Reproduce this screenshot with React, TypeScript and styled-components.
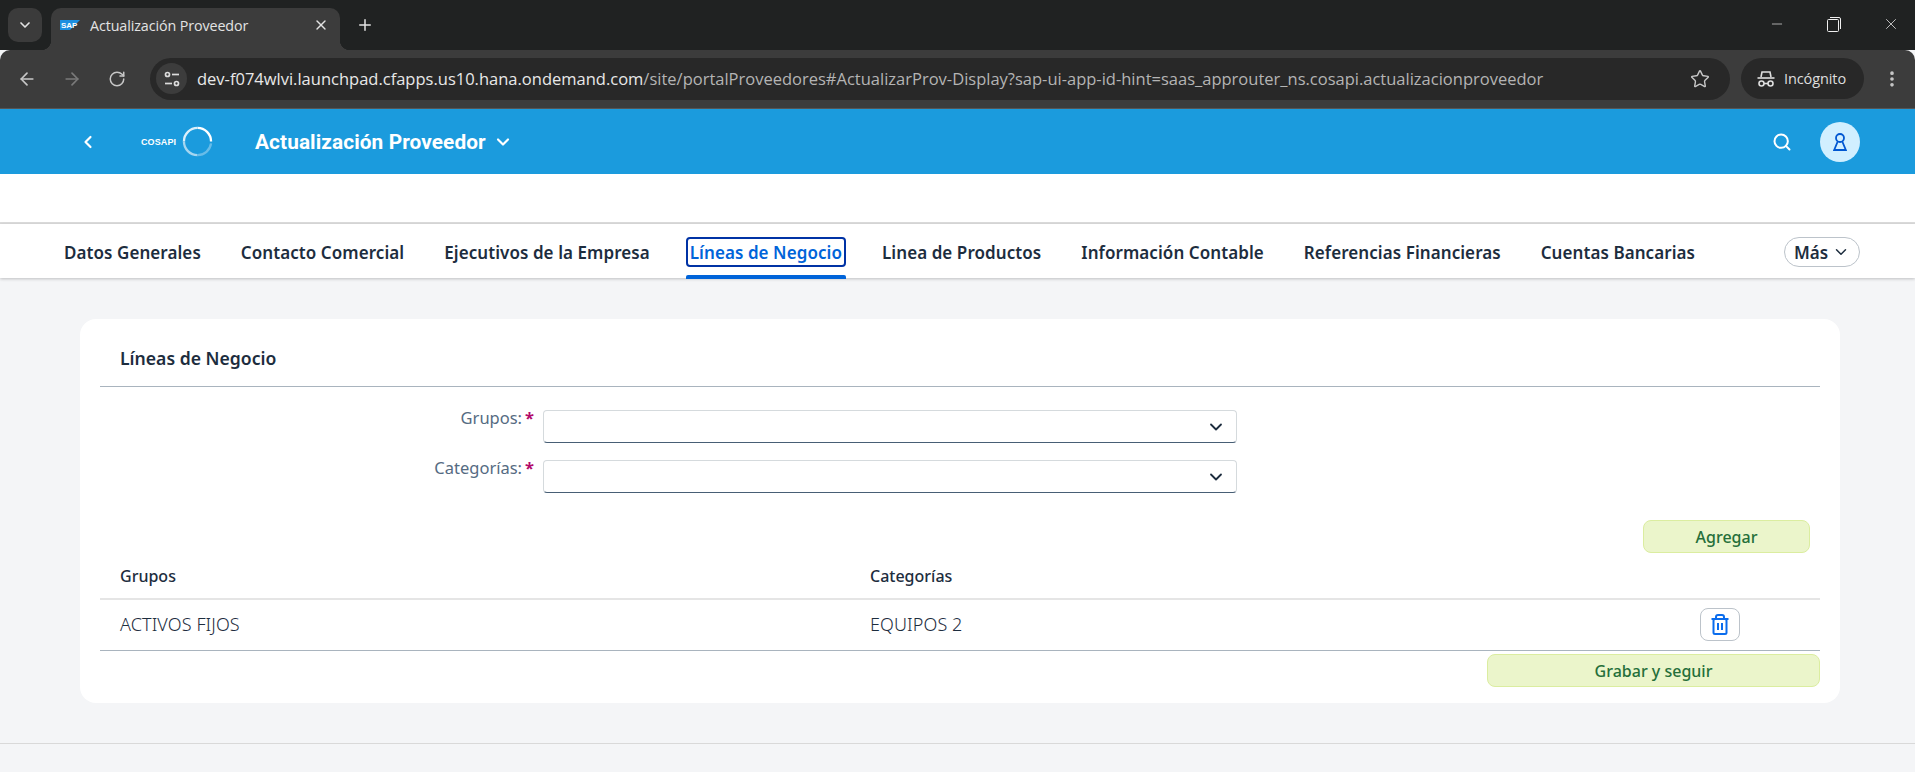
import React from "react";
import styled, { createGlobalStyle } from "styled-components";
import { ArrowLeft, ArrowRight, ChevronDown, ChevronLeft, EllipsisVertical, Minus, Plus, RotateCw, Search, Star, X } from "lucide-react";

const Global = createGlobalStyle`
  html, body { margin: 0; padding: 0; background: #f3f4f6; }
  * { box-sizing: border-box; }
`;
const Page = styled.div`
  width: 1915px; height: 772px; overflow: hidden; display: flex; flex-direction: column;
  background: #f4f5f7; font-family: "Noto Sans", sans-serif; color: #1d2d3e;
`;
const TabStrip = styled.div`
  height: 50px; background: #202222; display: flex; align-items: flex-end; padding-left: 8px; color: #e3e3e3; flex: none;
`;
const TabListBtn = styled.div`
  width: 34px; height: 34px; margin: 0 9px 8px 0; border-radius: 10px; background: #3b3b3b;
  display: flex; align-items: center; justify-content: center; color: #e3e3e3;
`;
const BrowserTab = styled.div`
  position: relative; width: 289px; height: 42px; background: #3c3c3c; border-radius: 10px 10px 0 0;
  display: flex; align-items: center; padding: 0 11px 8px 9px; gap: 10px;
  &::before, &::after { content: ""; position: absolute; bottom: 0; width: 10px; height: 10px; }
  &::before { left: -10px; background: radial-gradient(circle at 0 0, #202222 10px, #3c3c3c 10.5px); }
  &::after { right: -10px; background: radial-gradient(circle at 100% 0, #202222 10px, #3c3c3c 10.5px); }
`;
const TabTitle = styled.span`
  flex: 1; font-family: "Open Sans", sans-serif; font-size: 14.3px; color: #e3e3e3; white-space: nowrap; letter-spacing: -0.1px;
`;
const NewTab = styled.div`
  margin: 0 0 8px 14px; width: 22px; height: 34px; display: flex; align-items: center; justify-content: center; color: #e3e3e3;
`;
const WindowControls = styled.div`
  margin-left: auto; align-self: flex-start; display: flex; gap: 9px; height: 48px; align-items: center; color: #f0f0f0;
`;
const WindowBtn = styled.div`
  width: 48px; display: flex; justify-content: center; align-items: center;
`;
const Toolbar = styled.div`
  height: 59px; background: #3c3c3c; border-radius: 10px 10px 0 0; border-bottom: 1px solid #555;
  display: flex; align-items: center; flex: none; padding: 0 0 1px 17px; color: #c7c7c7;
`;
const NavBtn = styled.div<{ $dim?: boolean }>`
  width: 20px; height: 20px; margin-right: 25px; display: flex; align-items: center; justify-content: center;
  color: ${(p) => (p.$dim ? "#7a7a7a" : "#c7c7c7")};
`;
const Omnibox = styled.div`
  width: 1580px; height: 42px; margin-left: -2px; border-radius: 21px; background: #282828;
  display: flex; align-items: center; padding: 0 20px 0 6px;
`;
const TuneBadge = styled.div`
  width: 31px; height: 31px; border-radius: 50%; background: #3c3c3c; display: flex; align-items: center; justify-content: center; color: #dcdcdc; flex: none;
`;
const UrlText = styled.div`
  margin-left: 10px; font-family: "Open Sans", sans-serif; font-size: 16.5px; color: #e8e8e8; white-space: nowrap; flex: 1;
  span { color: #b4b4b4; }
`;
const IncognitoPill = styled.div`
  margin-left: 11px; width: 123px; height: 41px; border-radius: 21px; background: #282828; display: flex; align-items: center;
  padding-left: 15px; gap: 8px; color: #dedede; font-family: "Open Sans", sans-serif; font-size: 14.5px; letter-spacing: -0.1px;
`;
const Kebab = styled.div`
  margin-left: 18px; color: #c7c7c7; display: flex;
`;
const AppHeader = styled.header`
  height: 65px; background: #1b9bdd; display: flex; align-items: center; flex: none; padding-left: 78px; color: #fff;
`;
const BackIcon = styled.div`
  width: 20px; display: flex; justify-content: center; margin-right: 43px;
`;
const Logo = styled.div`
  width: 114px; display: flex; align-items: center; gap: 6px;
`;
const LogoText = styled.span`
  font-family: "Liberation Sans", sans-serif; font-weight: 700; font-size: 9px; letter-spacing: 0.1px; color: #fff;
`;
const AppTitle = styled.div`
  display: flex; align-items: center; gap: 7px; font-family: "Roboto", sans-serif; font-weight: 700; font-size: 20.8px; letter-spacing: 0.1px;
`;
const HeaderActions = styled.div`
  margin-left: auto; margin-right: 55px; display: flex; align-items: center; gap: 28px;
`;
const Avatar = styled.div`
  width: 40px; height: 40px; border-radius: 50%; background: #d1efff; display: flex; align-items: center; justify-content: center;
`;
const Spacer = styled.div`
  height: 50px; background: #fff; border-bottom: 2px solid #dcdcdc; flex: none;
`;
const TabBar = styled.nav`
  position: relative; height: 54px; background: #fff; box-shadow: 0 1px 3px rgba(0,0,0,.22); display: flex; align-items: center;
  padding: 2px 55px 0 60px; gap: 32px; flex: none;
`;
const TabItem = styled.div<{ $active?: boolean }>`
  position: relative; height: 30px; padding: 0 4px; display: flex; align-items: center; white-space: nowrap; border-radius: 4px;
  font-family: "Noto Sans", sans-serif; font-weight: 600; font-size: 17px; letter-spacing: 0.07px;
  color: ${(p) => (p.$active ? "#0064d9" : "#1d2d3e")};
  outline: ${(p) => (p.$active ? "2px solid #0032a5" : "none")}; outline-offset: -2px;
  ${(p) => p.$active && `&::after { content: ""; position: absolute; left: 0; right: 0; bottom: -12px; height: 4px; border-radius: 2px 2px 0 0; background: #0064d9; }`}
`;
const MoreBtn = styled.div`
  margin-left: auto; width: 76px; height: 30px; border: 1px solid #bcc3ca; border-radius: 15px; display: flex; align-items: center; justify-content: center; gap: 4px;
  font-weight: 600; font-size: 17px; color: #1d2d3e;
`;
const Main = styled.main`
  padding: 41px 75px 40px 80px; border-bottom: 1px solid #d9d9d9; flex: none;
`;
const Card = styled.section`
  background: #fff; border-radius: 16px; padding: 0 20px 16px; display: flex; flex-direction: column;
`;
const CardTitle = styled.h2`
  margin: 0; height: 68px; padding: 0 0 15px 20px; border-bottom: 1px solid #a9b4be; display: flex; align-items: flex-end;
  font-family: "Noto Sans", sans-serif; font-weight: 600; font-size: 17.6px; color: #1d2d3e; line-height: 26px;
`;
const Form = styled.div`
  margin-top: 23px; display: flex; flex-direction: column; gap: 17px;
`;
const FormRow = styled.div`
  display: grid; grid-template-columns: 434px 694px; column-gap: 9px; align-items: start;
`;
const Label = styled.label`
  display: flex; justify-content: flex-end; gap: 3px; font-size: 16.5px; color: #556b82; line-height: 16px;
  b { color: #b3096b; font-weight: 700; }
`;
const Select = styled.div`
  height: 33px; border: 1px solid #d5dadd; border-bottom: 1px solid #475e75; border-radius: 4px; background: #fff;
  display: flex; align-items: center; justify-content: flex-end; padding-right: 10px; color: #1d2d3e;
`;
const GreenButton = styled.button<{ $width: number; $mr?: number }>`
  width: ${(p) => p.$width}px; height: 33px; margin-right: ${(p) => p.$mr ?? 0}px; align-self: flex-end; border: 1px solid #dbeda0; border-radius: 8px;
  background: #ebf5cb; color: #256f3a; font-family: "Noto Sans", sans-serif; font-size: 16px; font-weight: 500; padding: 0;
`;
const AddWrap = styled.div`
  margin-top: 27px; display: flex; justify-content: flex-end;
`;
const HeadRow = styled.div`
  height: 47px; display: grid; grid-template-columns: 750px 750px 220px; align-items: center; padding-top: 1px;
  border-bottom: 2px solid #e5e5e5; font-weight: 500; font-size: 16px; color: #1d2d3e;
`;
const BodyRow = styled.div`
  height: 51px; display: grid; grid-template-columns: 750px 750px 220px; align-items: center; padding-bottom: 2px;
  border-bottom: 1px solid #a9b4be; font-size: 18px; font-weight: 300; letter-spacing: 0.1px; color: #1d2d3e;
`;
const Cell = styled.div`
  padding-left: 20px;
`;
const TrashBtn = styled.div`
  width: 40px; height: 33px; margin-left: 100px; margin-top: 1px; border: 1px solid #bcc3ca; border-radius: 8px; display: flex; align-items: center; justify-content: center;
`;
const SaveWrap = styled.div`
  margin-top: 3px; display: flex; justify-content: flex-end;
`;

export default function App() {
  const tabs = ["Datos Generales", "Contacto Comercial", "Ejecutivos de la Empresa", "Líneas de Negocio", "Linea de Productos", "Información Contable", "Referencias Financieras", "Cuentas Bancarias"];
  return (
    <Page>
      <Global />
      <TabStrip>
        <TabListBtn><ChevronDown size={16} strokeWidth={2.5} /></TabListBtn>
        <BrowserTab>
          <svg width="20" height="10" viewBox="0 0 20 10">
            <polygon points="0,0 20,0 10,10 0,10" fill="#1c8fe0" />
            <text x="1" y="8" fontFamily="Liberation Sans" fontWeight="700" fontSize="8" fill="#fff">SAP</text>
          </svg>
          <TabTitle>Actualización Proveedor</TabTitle>
          <X size={16} />
        </BrowserTab>
        <NewTab><Plus size={18} /></NewTab>
        <WindowControls>
          <WindowBtn><Minus size={16} strokeWidth={1} /></WindowBtn>
          <WindowBtn>
            <svg width="14" height="15" viewBox="0 0 14 15" fill="none" stroke="#f0f0f0" strokeWidth="1">
              <rect x="0.5" y="2.5" width="11" height="12" rx="1" />
              <path d="M3 0.5h9a1.5 1.5 0 0 1 1.5 1.5v10" />
            </svg>
          </WindowBtn>
          <WindowBtn><X size={18} strokeWidth={1} /></WindowBtn>
        </WindowControls>
      </TabStrip>
      <Toolbar>
        <NavBtn><ArrowLeft size={20} /></NavBtn>
        <NavBtn $dim><ArrowRight size={20} /></NavBtn>
        <NavBtn><RotateCw size={18} /></NavBtn>
        <Omnibox>
          <TuneBadge>
            <svg width="16" height="16" viewBox="0 0 16 16" fill="none" stroke="currentColor" strokeWidth="1.7">
              <circle cx="3.5" cy="3.5" r="2" /><path d="M8 3.5h7" />
              <circle cx="12.5" cy="12.5" r="2" /><path d="M1 12.5h7" />
            </svg>
          </TuneBadge>
          <UrlText>dev-f074wlvi.launchpad.cfapps.us10.hana.ondemand.com<span>/site/portalProveedores#ActualizarProv-Display?sap-ui-app-id-hint=saas_approuter_ns.cosapi.actualizacionproveedor</span></UrlText>
          <Star size={20} strokeWidth={1.7} />
        </Omnibox>
        <IncognitoPill>
          <svg width="20" height="20" viewBox="0 0 20 20" fill="none" stroke="currentColor" strokeWidth="1.6">
            <path d="M5 8l1-5h8l1 5" />
            <path d="M1.5 9h17" />
            <circle cx="5.5" cy="14.5" r="2.5" /><circle cx="14.5" cy="14.5" r="2.5" /><path d="M8 14.5h4" />
          </svg>
          Incógnito
        </IncognitoPill>
        <Kebab><EllipsisVertical size={20} strokeWidth={2.4} /></Kebab>
      </Toolbar>
      <AppHeader>
        <BackIcon><ChevronLeft size={20} strokeWidth={2.6} /></BackIcon>
        <Logo>
          <LogoText>COSAPI</LogoText>
          <svg width="31" height="31" viewBox="0 0 32 32" fill="none" strokeWidth="2.4">
            <path d="M30 16A14 14 0 0 0 16 2" stroke="#ffffff" />
            <path d="M16 2A14 14 0 0 0 2 16" stroke="#dbeffa" />
            <path d="M2 16A14 14 0 0 0 16 30" stroke="#a6d6f0" />
            <path d="M16 30A14 14 0 0 0 30 18" stroke="#68bce8" />
          </svg>
        </Logo>
        <AppTitle>Actualización Proveedor <ChevronDown size={20} strokeWidth={2.6} /></AppTitle>
        <HeaderActions>
          <Search size={20} strokeWidth={2.4} />
          <Avatar>
            <svg width="14" height="18" viewBox="0 0 14 18" fill="none" stroke="#0057d2" strokeWidth="1.8">
              <circle cx="7" cy="5" r="4" />
              <path d="M4.5 9 L1.2 17 H12.8 L9.5 9" />
            </svg>
          </Avatar>
        </HeaderActions>
      </AppHeader>
      <Spacer />
      <TabBar>
        {tabs.map((t, i) => <TabItem key={t} $active={i === 3}>{t}</TabItem>)}
        <MoreBtn>Más <ChevronDown size={18} strokeWidth={2} /></MoreBtn>
      </TabBar>
      <Main>
        <Card>
          <CardTitle>Líneas de Negocio</CardTitle>
          <Form>
            <FormRow>
              <Label>Grupos:<b>*</b></Label>
              <Select><ChevronDown size={20} strokeWidth={2.2} /></Select>
            </FormRow>
            <FormRow>
              <Label>Categorías:<b>*</b></Label>
              <Select><ChevronDown size={20} strokeWidth={2.2} /></Select>
            </FormRow>
          </Form>
          <AddWrap><GreenButton $width={167} $mr={10}>Agregar</GreenButton></AddWrap>
          <HeadRow><Cell>Grupos</Cell><Cell>Categorías</Cell></HeadRow>
          <BodyRow>
            <Cell>ACTIVOS FIJOS</Cell>
            <Cell>EQUIPOS 2</Cell>
            <TrashBtn>
              <svg width="18" height="21" viewBox="0 0 18 21" fill="none" stroke="#0a6ced" strokeWidth="2">
                <path d="M0.5 5h17" />
                <path d="M5 5V3a2 2 0 0 1 2-2h4a2 2 0 0 1 2 2v2" />
                <rect x="2.5" y="5" width="13" height="15" rx="1.5" />
                <path d="M7 9v7M11 9v7" />
              </svg>
            </TrashBtn>
          </BodyRow>
          <SaveWrap><GreenButton $width={333}>Grabar y seguir</GreenButton></SaveWrap>
        </Card>
      </Main>
    </Page>
  );
}
